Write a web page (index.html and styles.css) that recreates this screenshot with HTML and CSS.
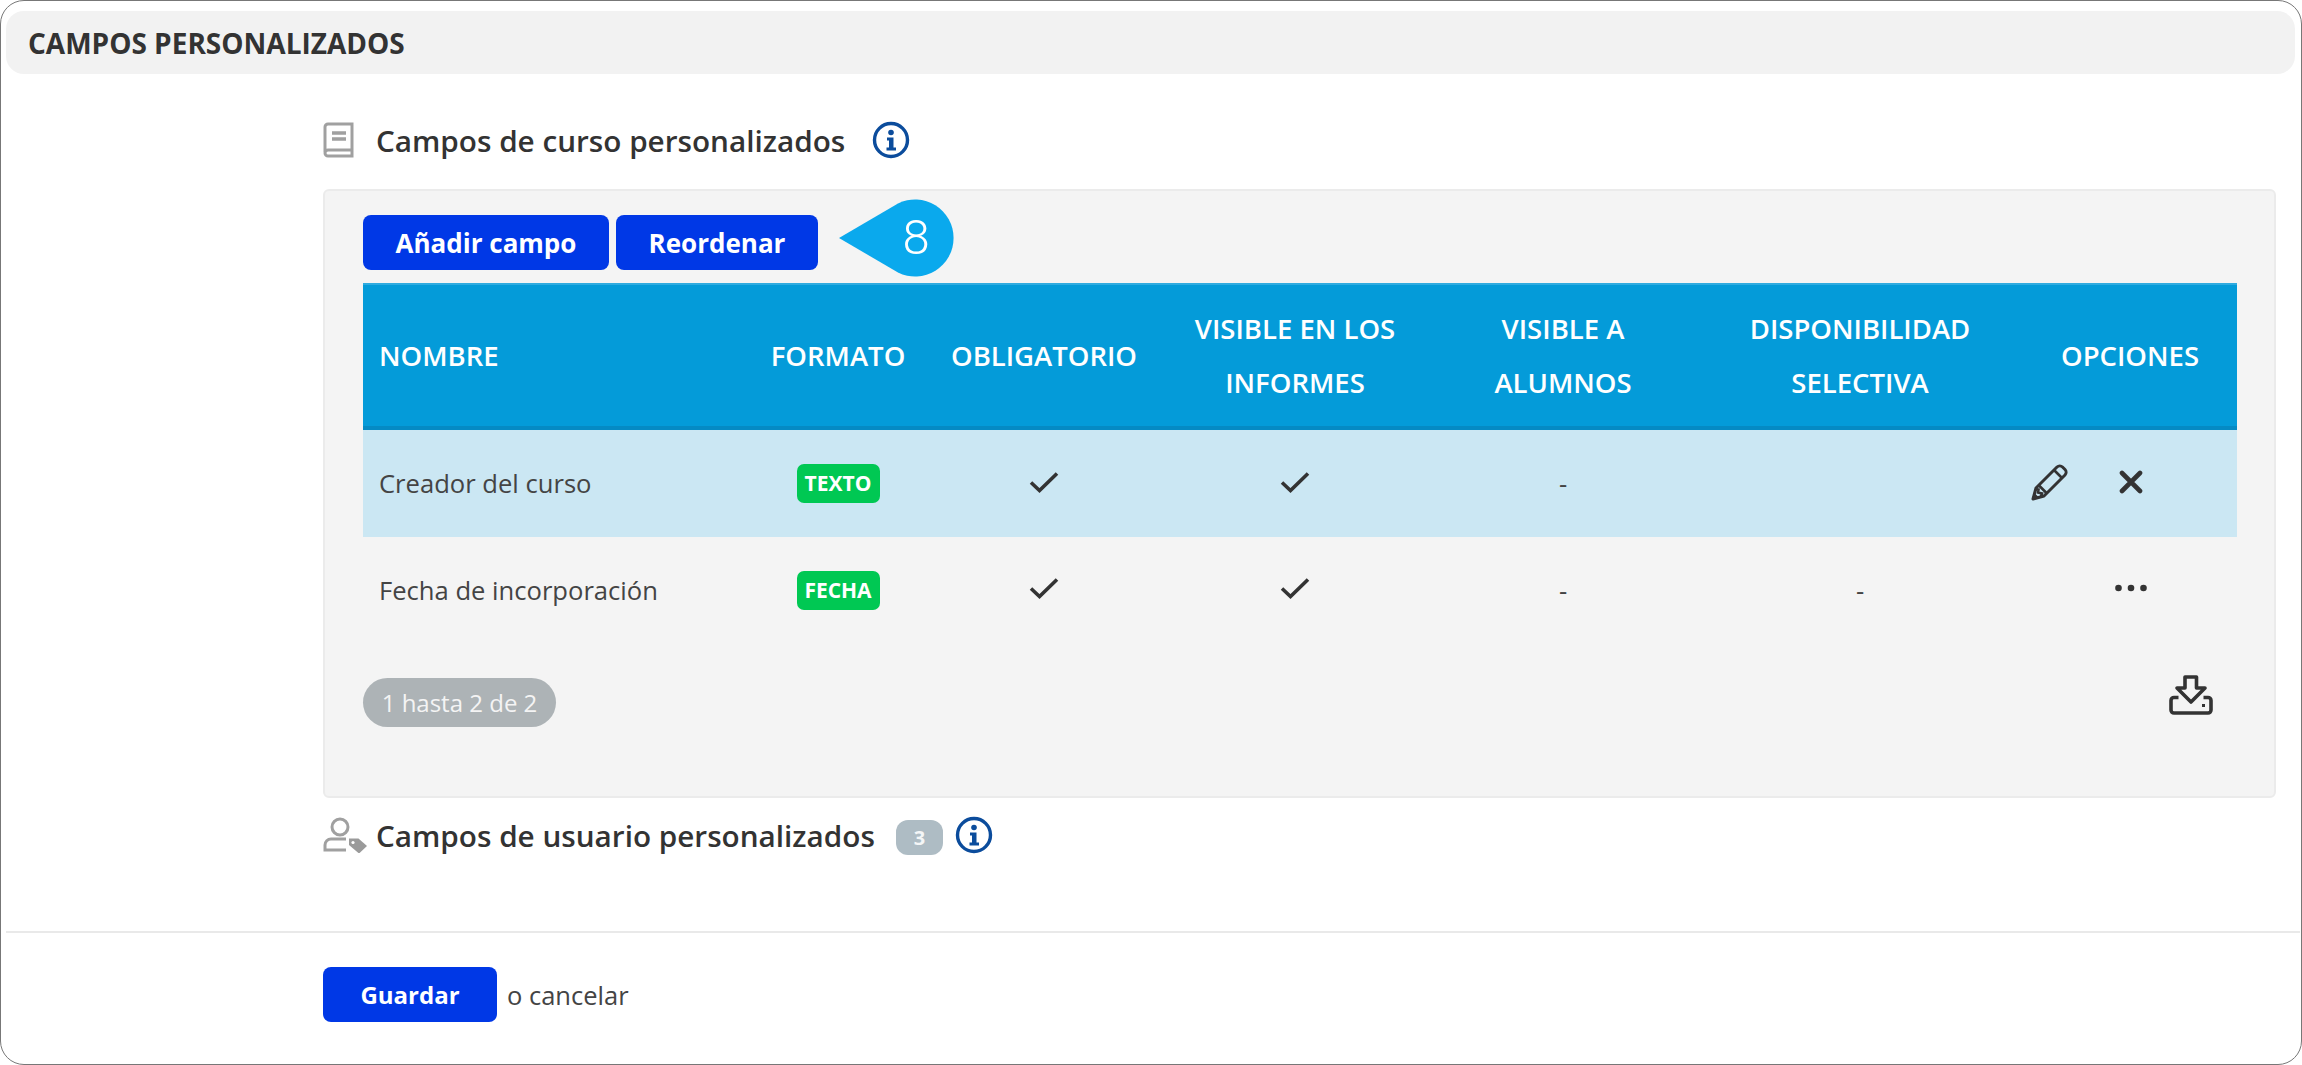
FILE: index.html
```html
<!DOCTYPE html>
<html lang="es">
<head>
<meta charset="utf-8">
<title>Campos personalizados</title>
<link rel="stylesheet" href="styles.css">
</head>
<body>
<svg class="defs" width="0" height="0" aria-hidden="true">
  <symbol id="info" viewBox="0 0 38 38">
    <circle cx="19" cy="19" r="16.5" fill="none" stroke="#0b4c9c" stroke-width="3.4"/>
    <circle cx="19" cy="11.5" r="2.8" fill="#0b4c9c"/>
    <path d="M15 16.5h6.5v10H24v3H14.500v-3H17v-7h-2z" fill="#0b4c9c"/>
  </symbol>
  <symbol id="check" viewBox="0 0 30 22">
    <path d="M2 11.500l8.500 8L28 2.500" fill="none" stroke="#333" stroke-width="3.600"/>
  </symbol>
</svg>
<div class="frame">
  <header class="bar"><h1>CAMPOS PERSONALIZADOS</h1></header>
  <main class="content">
    <h2 class="heading first">
      <svg class="book" viewBox="0 0 31 36"><path d="M2 30V5a3 3 0 0 1 3-3h24v32H5a3 3 0 0 1-3-3 3 3 0 0 1 3-3h24" fill="none" stroke="#a0a0a0" stroke-width="3"/><path d="M9 11h14M9 17h14" stroke="#a0a0a0" stroke-width="3.400"/></svg>
      <span class="title">Campos de curso personalizados</span>
      <svg class="info info-first"><use href="#info"/></svg>
    </h2>
    <section class="panel">
      <div class="toolbar">
        <button class="btn add">Añadir campo</button>
        <button class="btn reorder">Reordenar</button>
        <div class="callout">
          <svg class="pin" viewBox="0 0 118 78"><path d="M0 39L59 4.500A38.500 38.500 0 1 1 59 73.500z" fill="#0aa9ed"/></svg>
          <span class="num">8</span>
        </div>
      </div>
      <table class="grid">
        <thead>
          <tr>
            <th class="c-name">NOMBRE</th>
            <th class="c-format">FORMATO</th>
            <th class="c-req">OBLIGATORIO</th>
            <th class="c-rep">VISIBLE EN LOS INFORMES</th>
            <th class="c-vis">VISIBLE A<br>ALUMNOS</th>
            <th class="c-sel">DISPONIBILIDAD SELECTIVA</th>
            <th class="c-opt">OPCIONES</th>
          </tr>
        </thead>
        <tbody>
          <tr class="hl">
            <td class="c-name">Creador del curso</td>
            <td><span class="tag">TEXTO</span></td>
            <td><svg class="check"><use href="#check"/></svg></td>
            <td><svg class="check"><use href="#check"/></svg></td>
            <td>-</td>
            <td></td>
            <td>
              <div class="ops">
                <svg class="pencil" viewBox="0 0 38 38"><path d="M2 36l3-11L26 4a4 4 0 0 1 5.500 0l2.500 2.500a4 4 0 0 1 0 5.500L13 33z" fill="none" stroke="#333" stroke-width="3" stroke-linejoin="round"/><path d="M23 7l8 8M8 22.500l7.500 7.500M4 26l3.500 0.500-0.500 3 4 1-1 3" fill="none" stroke="#333" stroke-width="2.600"/><path d="M2 36l1.500-6 4.500 4.500z" fill="#333"/></svg>
                <svg class="cross" viewBox="0 0 24 24"><path d="M3 3l18 18M21 3L3 21" stroke="#333" stroke-width="4.600" stroke-linecap="round"/></svg>
              </div>
            </td>
          </tr>
          <tr>
            <td class="c-name">Fecha de incorporación</td>
            <td><span class="tag">FECHA</span></td>
            <td><svg class="check"><use href="#check"/></svg></td>
            <td><svg class="check"><use href="#check"/></svg></td>
            <td>-</td>
            <td>-</td>
            <td><svg class="dots" viewBox="0 0 32 8"><circle cx="4" cy="4" r="3.300" fill="#333"/><circle cx="16.500" cy="4" r="3.300" fill="#333"/><circle cx="29" cy="4" r="3.300" fill="#333"/></svg></td>
          </tr>
        </tbody>
      </table>
      <div class="tablefoot">
        <span class="pill">1 hasta 2 de 2</span>
        <svg class="download" viewBox="0 0 44 40"><path d="M16 2h11.500v11H36L22 27 8 13h8z" fill="none" stroke="#333" stroke-width="3.600" stroke-linejoin="round"/><path d="M9.500 22.500H5a3 3 0 0 0-3 3V35a3 3 0 0 0 3 3h34a3 3 0 0 0 3-3v-9.500a3 3 0 0 0-3-3h-4.500" fill="none" stroke="#333" stroke-width="3.600"/><rect x="33" y="29" width="3" height="3" fill="#333"/></svg>
      </div>
    </section>
    <h2 class="heading second">
      <svg class="user" viewBox="0 0 44 36"><circle cx="17" cy="10" r="8" fill="none" stroke="#a0a0a0" stroke-width="3"/><path d="M23 22H8a6 6 0 0 0-6 6v5h21" fill="none" stroke="#a0a0a0" stroke-width="3"/><path d="M26 21.500h9.500L44 29l-8 7.500L26 28z" fill="#9a9a9a"/><circle cx="30" cy="25.500" r="1.600" fill="#fff"/></svg>
      <span class="title">Campos de usuario personalizados</span>
      <span class="count">3</span>
      <svg class="info"><use href="#info"/></svg>
    </h2>
  </main>
  <footer class="foot">
    <button class="btn save">Guardar</button>
    <span class="cancel">o cancelar</span>
  </footer>
</div>
</body>
</html>
```
FILE: styles.css
```css
* { box-sizing: border-box; }
html, body { margin: 0; background: #fff; }
body { font-family: "Open Sans", "Noto Sans", sans-serif; color: #333; }
.defs { position: absolute; }
.frame {
  height: 1065px;
  border: 1px solid #777;
  border-radius: 24px;
  padding: 10px 6px 0 4px;
  overflow: hidden;
}
.bar {
  height: 63px;
  margin-left: 1px;
  background: #f2f2f2;
  border-radius: 18px;
  display: flex;
  align-items: center;
  padding-left: 22px;
}
.bar h1 { margin: 0; font-size: 28px; font-weight: 700; color: #333; }
.content { padding: 0 19px 0 318px; }
.heading {
  display: flex;
  align-items: center;
  margin: 0;
  font-size: 29.700px;
  font-weight: 600;
  color: #333;
}
.heading.first { margin-top: 48px; height: 36px; }
.heading.second { margin-top: 18px; height: 38px; }
.book { width: 31px; height: 36px; margin-right: 22px; }
.user { width: 44px; height: 36px; margin-right: 9px; }
.info { width: 38px; height: 38px; }
.info-first { margin-left: 27px; }
.count {
  width: 47px;
  height: 35px;
  margin: 5px 12px 0 21px;
  border-radius: 12px;
  background: #aebcc4;
  color: #f4f6f7;
  font-size: 20px;
  font-weight: 700;
  display: flex;
  align-items: center;
  justify-content: center;
}
.panel {
  height: 609px;
  margin-top: 31px;
  background: #f4f4f4;
  border: 2px solid #ebebeb;
  border-radius: 6px;
  padding: 24px 38px 0;
}
.toolbar { display: flex; align-items: center; height: 55px; gap: 7px; }
.btn {
  height: 55px;
  border: 0;
  border-radius: 8px;
  background: #0038e6;
  color: #fff;
  font-family: inherit;
  font-size: 26px;
  font-weight: 700;
  padding: 0;
}
.add { width: 246px; }
.reorder { width: 202px; }
.save { width: 174px; font-size: 24px; }
.callout { position: relative; width: 118px; height: 78px; margin: -1px 0 0 11px; }
.pin { display: block; width: 118px; height: 78px; margin: -4px 0 0 3px; }
.num {
  position: absolute;
  left: 60px;
  top: -4px;
  width: 40px;
  height: 78px;
  line-height: 78px;
  text-align: center;
  color: #fff;
  font-family: Roboto, sans-serif;
  font-size: 49px;
  font-weight: 300;
}
.grid {
  width: 1874px;
  margin-top: 13px;
  border-collapse: collapse;
  table-layout: fixed;
}
.grid th {
  height: 144px;
  background: #049bd9;
  border-top: 2px solid #2fabe0;
  border-bottom: 4px solid #058ac4;
  color: #fff;
  font-size: 27.500px;
  font-weight: 600;
  line-height: 54px;
  text-align: center;
  padding: 0;
}
.grid td {
  height: 106px;
  text-align: center;
  font-size: 25.600px;
  color: #444;
  padding: 0;
}
.grid .hl td { height: 109px; }
.grid .c-name { text-align: left; padding-left: 16px; }
th.c-name { width: 386px; }
th.c-format { width: 178px; }
th.c-req { width: 234px; }
th.c-rep { width: 268px; }
th.c-vis { width: 268px; }
th.c-sel { width: 326px; }
th.c-opt { width: 214px; }
.hl td { background: #cbe7f3; }
.tag {
  display: inline-block;
  width: 83px;
  height: 39px;
  line-height: 38px;
  background: #00c853;
  color: #fff;
  border-radius: 7px;
  font-size: 21px;
  font-weight: 700;
  text-align: center;
  vertical-align: middle;
}
.check { display: block; width: 30px; height: 22px; margin: -4px auto 0; }
.ops { display: flex; align-items: center; justify-content: center; gap: 50px; padding-right: 83px; }
.pencil { width: 38px; height: 38px; margin: -3px 0 0 -3px; }
.cross { width: 24px; height: 24px; margin-top: -3px; }
.dots { display: block; width: 33px; height: 8px; margin: -4px auto 0; }
.tablefoot {
  display: flex;
  justify-content: space-between;
  align-items: flex-start;
  padding: 35px 23px 0 0;
}
.pill {
  width: 193px;
  height: 49px;
  line-height: 49px;
  border-radius: 25px;
  background: #adb3b6;
  color: #f4f4f4;
  font-size: 24px;
  text-align: center;
}
.download { width: 44px; height: 40px; margin-top: -3px; }
.foot {
  margin: 77px -5px 0 1px;
  border-top: 2px solid #e9e9e9;
  padding: 34px 0 0 317px;
  display: flex;
  align-items: center;
  gap: 10px;
}
.cancel { font-size: 25.500px; color: #444; }
```
